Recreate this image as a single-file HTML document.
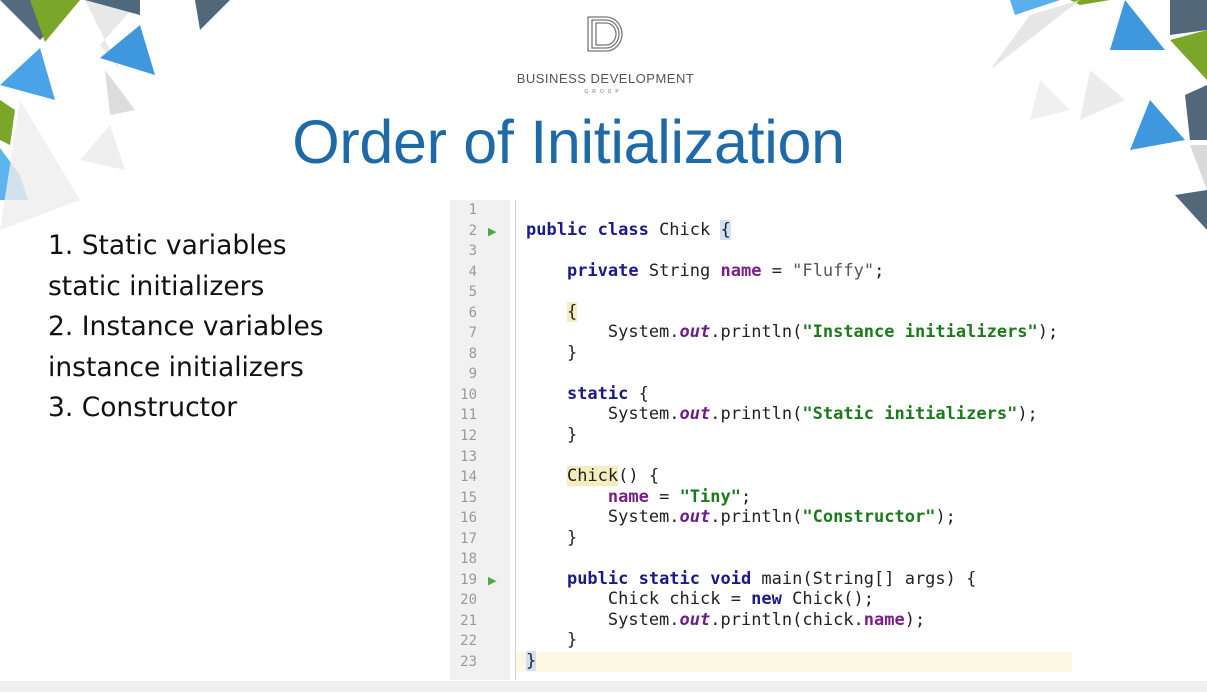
<!DOCTYPE html>
<html><head><meta charset="utf-8"><style>
body{margin:0;width:1207px;height:692px;background:#fff;position:relative;overflow:hidden;font-family:"Liberation Sans",sans-serif}
.abs{position:absolute}
#bar{left:0;top:681px;width:1207px;height:11px;background:#efefef}
#title{left:0;width:1137px;top:107px;text-align:center;font-size:61px;color:#1e6aa8;letter-spacing:-0.3px}
#bdg{left:0;width:1211px;top:71px;text-align:center;font-size:13px;color:#555;letter-spacing:0.5px}
#grp{left:0;width:1207px;top:89px;text-align:center;font-size:5px;color:#777;letter-spacing:4px}
#list{left:48px;top:226px;font-family:"DejaVu Sans",sans-serif;font-size:26.5px;line-height:40.5px;color:#111}
#gut{left:450px;top:200px;width:60px;height:480px;background:#f1f1f1}
#sep{left:515px;top:200px;width:1px;height:480px;background:#c8d4e0}
#hl{left:516px;top:652px;width:556px;height:20px;background:#fdf8e1}
#nums{left:450px;top:200px;width:27px;text-align:right;font-family:"DejaVu Sans Mono",monospace;font-size:14px;line-height:20.55px;color:#999}
#code{left:526px;top:199px;font-family:"DejaVu Sans Mono",monospace;font-size:17px;line-height:20.55px;color:#222;white-space:pre;margin:0}
.k{color:#1a1a8c;font-weight:bold}
.s{color:#1b7a1b;font-weight:bold}
.f{color:#7a1e8a;font-weight:bold}
.o{color:#6a1e8a;font-weight:bold;font-style:italic}
.g{color:#555}
.tri{position:absolute;left:488px;font-size:11px;color:#4a4}
</style></head><body>
<svg class="abs" style="left:0;top:0" width="1207" height="240">
<polygon points="0,0 80,0 40,40" fill="#556b7d"/>
<polygon points="30,0 80,0 45,42" fill="#7aa62a"/>
<polygon points="85,0 140,0 100,45 120,70" fill="#e8e8e8"/>
<polygon points="85,0 140,0 140,15" fill="#50687b"/>
<polygon points="140,25 155,75 100,58" fill="#3f97de"/>
<polygon points="40,48 55,100 0,85" fill="#4aa3e6"/>
<polygon points="195,0 230,0 200,30" fill="#52687a"/>
<polygon points="0,100 15,110 10,145 0,140" fill="#7aa62a"/>
<polygon points="0,148 20,175 28,200 0,200" fill="#5db3ef"/>
<polygon points="20,100 80,200 0,230" fill="#eeeeee" opacity="0.8"/>
<polygon points="105,70 135,110 110,115" fill="#dcdcdc"/>
<polygon points="110,125 125,170 80,160" fill="#efefef"/>
<polygon points="1010,0 1060,0 1015,15" fill="#5ab0ef"/>
<polygon points="1070,0 1110,0 1080,5" fill="#7aa62a"/>
<polygon points="1030,15 1080,0 990,70" fill="#e6e6e6"/>
<polygon points="1125,0 1165,50 1110,50" fill="#3f97de"/>
<polygon points="1170,0 1207,0 1207,30 1170,35" fill="#52687a"/>
<polygon points="1170,40 1207,30 1207,80" fill="#7aa62a"/>
<polygon points="1150,100 1185,140 1130,150" fill="#3f97de"/>
<polygon points="1185,95 1207,85 1207,140 1190,140" fill="#52687a"/>
<polygon points="1190,145 1207,145 1207,190" fill="#dadada"/>
<polygon points="1175,195 1207,190 1207,230" fill="#52687a"/>
<polygon points="1090,70 1125,100 1080,120" fill="#ececec"/>
<polygon points="1040,80 1070,110 1030,120" fill="#f0f0f0"/>
<g fill="none" stroke="#777" stroke-width="1.3">
<path d="M588,17 h18 a16,17 0 0 1 0,34 h-18 z"/>
<path d="M592,20 h14 a13,14 0 0 1 0,28 h-14 z"/>
<path d="M596,23 h10 a10,11 0 0 1 0,22 h-10 z"/>
</g>
</svg>
<div class="abs" id="bdg">BUSINESS DEVELOPMENT</div>
<div class="abs" id="grp">GROUP</div>
<div class="abs" id="title">Order of Initialization</div>
<div class="abs" id="list">1. Static variables<br>static initializers<br>2. Instance variables<br>instance initializers<br>3. Constructor</div>
<div class="abs" id="gut"></div>
<div class="abs" id="hl"></div>
<div class="abs" id="sep"></div>
<div class="abs" id="nums">1<br>2<br>3<br>4<br>5<br>6<br>7<br>8<br>9<br>10<br>11<br>12<br>13<br>14<br>15<br>16<br>17<br>18<br>19<br>20<br>21<br>22<br>23</div>
<div class="tri" style="top:225px">▶</div>
<div class="tri" style="top:574px">▶</div>
<pre class="abs" id="code">

<span class="k">public class</span> Chick <span style="background:#cfe1f3">{</span>

    <span class="k">private</span> String <span class="f">name</span> = <span class="g">"Fluffy"</span>;

    <span style="background:#f5ecc0">{</span>
        System.<span class="o">out</span>.println(<span class="s">"Instance initializers"</span>);
    }

    <span class="k">static</span> {
        System.<span class="o">out</span>.println(<span class="s">"Static initializers"</span>);
    }

    <span style="background:#f5ecc0">Chick</span>() {
        <span class="f">name</span> = <span class="s">"Tiny"</span>;
        System.<span class="o">out</span>.println(<span class="s">"Constructor"</span>);
    }

    <span class="k">public static void</span> main(String[] args) {
        Chick chick = <span class="k">new</span> Chick();
        System.<span class="o">out</span>.println(chick.<span class="f">name</span>);
    }
<span style="background:#cfe1f3">}</span></pre>
<div class="abs" id="bar"></div>
</body></html>
